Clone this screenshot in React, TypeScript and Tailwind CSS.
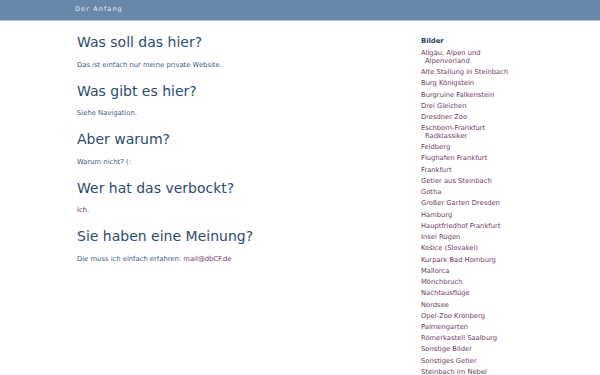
const BILDER = [
  'Allgäu, Alpen und Alpenvorland',
  'Alte Stallung in Steinbach',
  'Burg Königstein',
  'Burgruine Falkenstein',
  'Drei Gleichen',
  'Dresdner Zoo',
  'Eschborn-Frankfurt Radklassiker',
  'Feldberg',
  'Flughafen Frankfurt',
  'Frankfurt',
  'Getier aus Steinbach',
  'Gotha',
  'Großer Garten Dresden',
  'Hamburg',
  'Hauptfriedhof Frankfurt',
  'Insel Rügen',
  'Košice (Slovakei)',
  'Kurpark Bad Homburg',
  'Mallorca',
  'Mönchbruch',
  'Nachtausflüge',
  'Nordsee',
  'Opel-Zoo Kronberg',
  'Palmengarten',
  'Römerkastell Saalburg',
  'Sonstige Bilder',
  'Sonstiges Getier',
  'Steinbach im Nebel',
]

const SECTIONS = [
  { title: 'Was soll das hier?', body: <>Das ist einfach nur meine private Website.</> },
  { title: 'Was gibt es hier?', body: <>Siehe Navigation.</> },
  { title: 'Aber warum?', body: <>Warum nicht? (:</> },
  { title: 'Wer hat das verbockt?', body: <a className="text-[#6d3b62]">Ich.</a> },
  {
    title: 'Sie haben eine Meinung?',
    body: (
      <>
        Die muss ich einfach erfahren: <a className="text-[#6d3b62]">mail@dbCF.de</a>
      </>
    ),
  },
]

export default function App() {
  return (
    <div className="h-[375px] w-[600px] overflow-hidden bg-white font-['DejaVu_Sans',sans-serif]">
      {/* top bar */}
      <div className="flex h-[21px] items-center border-b border-[#b4c6da] bg-[#6787ab] pl-[75px]">
        <span className="text-[6.5px] tracking-[1.1px] text-[#e8eef5]">Der Anfang</span>
      </div>

      <div className="flex">
        <main className="w-[420px] pl-[77px] pt-[10px]">
          {SECTIONS.map((s) => (
            <section key={s.title} className="mb-[10px]">
              <h1 className="text-[14px] leading-[22px] text-[#2c4a6e]">{s.title}</h1>
              <p className="mt-[6.5px] text-[6.8px] leading-[10px] text-[#3e5b7c]">{s.body}</p>
            </section>
          ))}
        </main>

        <aside className="w-[96px] pl-[1px] pt-[15px]">
          <h2 className="text-[6.8px] font-bold leading-[10px] text-[#2a4264]">Bilder</h2>
          <ul className="mt-[4px] flex flex-col gap-[3.45px]">
            {BILDER.map((b) => (
              <li key={b} className="pl-[4px] -indent-[4px] text-[6.75px] leading-[7.8px] text-[#6d3b62]">
                {b}
              </li>
            ))}
          </ul>
        </aside>
      </div>
    </div>
  )
}
